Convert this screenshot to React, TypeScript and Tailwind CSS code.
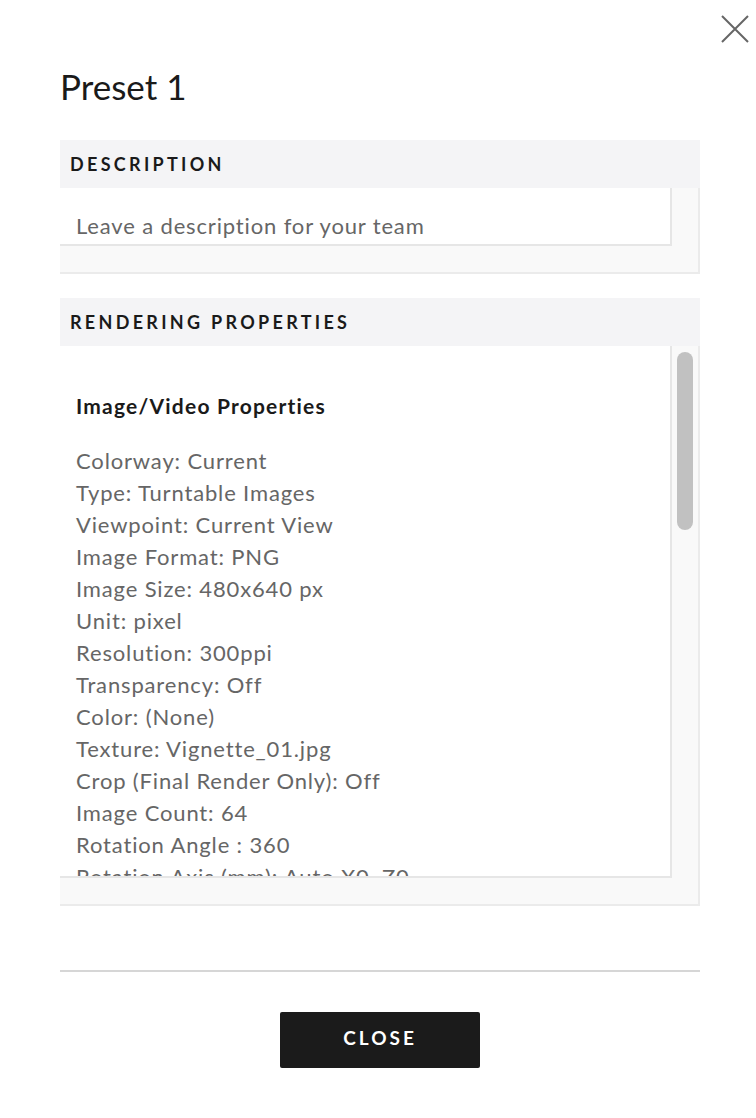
const properties = [
  'Colorway: Current',
  'Type: Turntable Images',
  'Viewpoint: Current View',
  'Image Format: PNG',
  'Image Size: 480x640 px',
  'Unit: pixel',
  'Resolution: 300ppi',
  'Transparency: Off',
  'Color: (None)',
  'Texture: Vignette_01.jpg',
  'Crop (Final Render Only): Off',
  'Image Count: 64',
  'Rotation Angle : 360',
  'Rotation Axis (mm): Auto X0, Z0',
];

function SectionHeader({ title }: { title: string }) {
  return (
    <div className="h-12 bg-[#f4f4f6] px-[10px] flex items-center">
      <h2 className="text-[18px] font-bold tracking-[3.3px] text-[#1a1a1a]">{title}</h2>
    </div>
  );
}

export default function App() {
  return (
    <div className="min-h-screen bg-white font-['Lato',sans-serif] relative">
      {/* Close icon */}
      <button className="absolute top-[15px] left-[721px] text-[#666]" aria-label="Close">
        <svg width="28" height="28" viewBox="0 0 28 28" fill="none" stroke="currentColor" strokeWidth="2">
          <path d="M1 1L27 27M27 1L1 27" />
        </svg>
      </button>

      <main className="ml-[60px] w-[640px] pt-[65px]">
        {/* Title */}
        <h1 className="text-[35px] leading-[42px] text-[#1a1a1a]">Preset 1</h1>

        {/* Description */}
        <section className="mt-[33px]">
          <SectionHeader title="DESCRIPTION" />
          <div className="bg-[#f9f9f9] border-r-2 border-b-2 border-[#ebebeb] pr-[26px] pb-[26px]">
            <div className="bg-white border-r-2 border-b-2 border-[#e6e6e6] h-[58px] pl-[16px] flex items-center">
              <span className="text-[22px] tracking-[0.85px] text-[#666] pt-[18px]">
                Leave a description for your team
              </span>
            </div>
          </div>
        </section>

        {/* Rendering properties */}
        <section className="mt-[24px]">
          <SectionHeader title="RENDERING PROPERTIES" />
          <div className="bg-[#f9f9f9] border-r-2 border-b-2 border-[#ebebeb] flex pb-[26px]">
            <div className="flex-1 bg-white border-r-2 border-b-2 border-[#e6e6e6] h-[532px] overflow-hidden pl-[16px] pt-[47px]">
              <h3 className="text-[21px] font-bold tracking-[1.2px] text-[#1a1a1a] leading-[26px]">
                Image/Video Properties
              </h3>
              <ul className="mt-[26px]">
                {properties.map((p) => (
                  <li key={p} className="text-[22px] tracking-[0.85px] leading-[32px] text-[#666] whitespace-nowrap">
                    {p}
                  </li>
                ))}
              </ul>
            </div>
            <div className="w-[26px] pt-[6px] flex justify-center">
              <div className="w-[16px] h-[178px] rounded-full bg-[#c1c1c1]" />
            </div>
          </div>
        </section>

        {/* Footer */}
        <div className="mt-[64px] h-[2px] bg-[#d6d6d6]" />
        <div className="flex justify-center pt-[40px] pb-[50px]">
          <button className="w-[200px] h-[56px] bg-[#1b1b1b] rounded-[2px] text-white text-[19px] font-bold tracking-[3px] pb-[4px]">
            CLOSE
          </button>
        </div>
      </main>
    </div>
  );
}
